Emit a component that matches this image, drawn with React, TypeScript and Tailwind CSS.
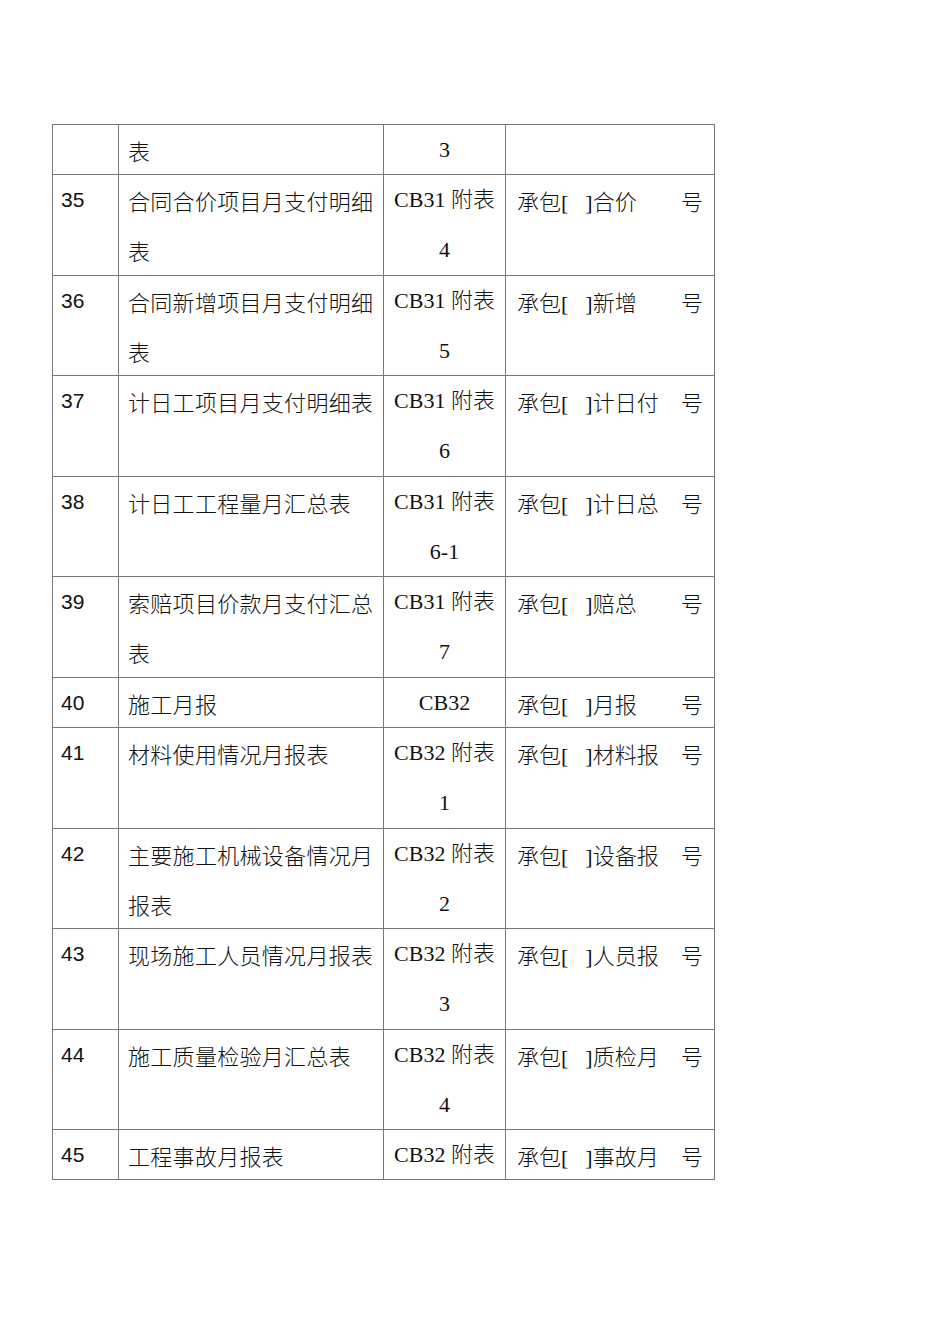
const rows = [
  { no: '', name: ['表'], code: ['3'], ref: '' },
  { no: '35', name: ['合同合价项目月支付明细', '表'], code: ['CB31 附表', '4'], ref: '合价' },
  { no: '36', name: ['合同新增项目月支付明细', '表'], code: ['CB31 附表', '5'], ref: '新增' },
  { no: '37', name: ['计日工项目月支付明细表'], code: ['CB31 附表', '6'], ref: '计日付' },
  { no: '38', name: ['计日工工程量月汇总表'], code: ['CB31 附表', '6-1'], ref: '计日总' },
  { no: '39', name: ['索赔项目价款月支付汇总', '表'], code: ['CB31 附表', '7'], ref: '赔总' },
  { no: '40', name: ['施工月报'], code: ['CB32'], ref: '月报' },
  { no: '41', name: ['材料使用情况月报表'], code: ['CB32 附表', '1'], ref: '材料报' },
  { no: '42', name: ['主要施工机械设备情况月', '报表'], code: ['CB32 附表', '2'], ref: '设备报' },
  { no: '43', name: ['现场施工人员情况月报表'], code: ['CB32 附表', '3'], ref: '人员报' },
  { no: '44', name: ['施工质量检验月汇总表'], code: ['CB32 附表', '4'], ref: '质检月' },
  { no: '45', name: ['工程事故月报表'], code: ['CB32 附表'], ref: '事故月' },
]

const zh = "font-['Noto_Sans_CJK_SC',sans-serif]"

export default function App() {
  return (
    <div className="min-h-[1344px] w-[950px] bg-white pt-[124px] pl-[52px] text-[22px] text-[#111]">
      <div className="w-[663px] border-t border-l border-[#777] font-light font-['Liberation_Serif','Noto_Sans_CJK_SC',serif]">
        {rows.map((r, i) => {
          const lines = Math.max(r.name.length, r.code.length)
          return (
            <div
              key={i}
              className="grid grid-cols-[66px_265px_122px_209px] grid-rows-1 overflow-hidden border-b border-[#777] leading-[50px]"
              style={{ height: lines * 50.25 }}
            >
              <div className="border-r border-[#777] pl-[8px] text-[21px] font-normal font-['Liberation_Sans',sans-serif]">
                {r.no}
              </div>
              <div className={`border-r border-[#777] pl-[9px] tracking-[0.3px] ${zh}`}>
                {r.name.map((l, j) => (
                  <div key={j} className="whitespace-nowrap">
                    {l}
                  </div>
                ))}
              </div>
              <div className="border-r border-[#777] text-center">
                {r.code.map((l, j) => (
                  <div key={j} className="whitespace-nowrap">
                    {l}
                  </div>
                ))}
              </div>
              <div className="border-r border-[#777] pl-[11px] pr-[11px]">
                {r.ref && (
                  <div className="flex justify-between whitespace-nowrap">
                    <span>
                      <span className={zh}>承包</span>
                      <span>[</span>
                      <span className="inline-block w-[17px]" />
                      <span>]</span>
                      <span className={zh}>{r.ref}</span>
                    </span>
                    <span className={zh}>号</span>
                  </div>
                )}
              </div>
            </div>
          )
        })}
      </div>
    </div>
  )
}
